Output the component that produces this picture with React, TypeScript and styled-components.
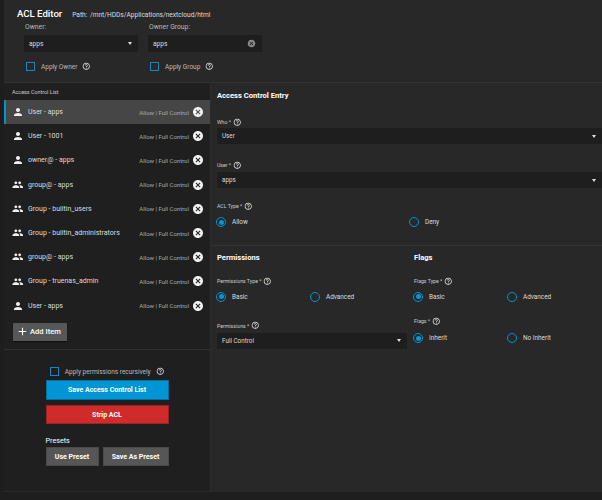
import React from "react";
import styled, { createGlobalStyle } from "styled-components";
import { MdPerson, MdPeople, MdCancel, MdHelpOutline, MdAdd } from "react-icons/md";

const BLUE = "#0095d5";

const GlobalStyle = createGlobalStyle`
  html, body { margin: 0; padding: 0; background: #1e1e1e; }
  body { font-family: Roboto, "Noto Sans", "Liberation Sans", sans-serif; color: #ddd; }
  * { box-sizing: border-box; }
`;

const Page = styled.div`
  width: 602px;
  height: 500px;
  overflow: hidden;
  background: #1e1e1e;
  padding-left: 4px;
`;

/* ---------- header ---------- */
const Header = styled.header`
  height: 83px;
  background: #282828;
  border-bottom: 1px solid #323232;
  padding: 8px 0 0 13px;
`;
const TitleRow = styled.div`
  display: flex;
  align-items: baseline;
  gap: 10px;
  height: 12px;
`;
const Title = styled.h1`
  margin: 0;
  font-size: 9.6px;
  font-weight: 500;
  line-height: 12px;
  color: #fff;
`;
const PathText = styled.span`
  font-size: 6.6px;
  color: #ddd;
  word-spacing: 1px;
`;
const FieldsGrid = styled.div`
  display: grid;
  grid-template-columns: 114px 114px;
  column-gap: 10px;
  padding-left: 7px;
  margin-top: 3px;
`;
const Field = styled.div`
  display: flex;
  flex-direction: column;
`;
const FieldLabel = styled.label`
  font-size: 6.8px;
  line-height: 9px;
  color: #bbb;
  padding-left: 1px;
`;
const InputBox = styled.div`
  margin-top: 3px;
  height: 17px;
  background: #1e1e1e;
  display: flex;
  align-items: center;
  justify-content: space-between;
  padding: 0 6px 0 5px;
  font-size: 6.6px;
  color: #ddd;
`;
const Caret = styled.span`
  width: 0;
  height: 0;
  border-left: 2.5px solid transparent;
  border-right: 2.5px solid transparent;
  border-top: 3px solid #e0e0e0;
`;
const CheckRow = styled.div<{ $mt?: number; $center?: boolean }>`
  display: flex;
  align-items: center;
  justify-content: ${(p) => (p.$center ? "center" : "flex-start")};
  gap: 6px;
  margin-top: ${(p) => p.$mt ?? 0}px;
  padding-left: ${(p) => (p.$center ? 0 : 2)}px;
  height: 9px;
  font-size: 6.5px;
  color: #bbb;
`;
const CheckBox = styled.span`
  width: 9px;
  height: 9px;
  border: 1.5px solid #1f82bb;
  flex-shrink: 0;
`;
const Help = styled(MdHelpOutline)`
  width: 8.5px;
  height: 8.5px;
  color: #e8e8e8;
  flex-shrink: 0;
  margin-left: -1px;
`;

/* ---------- main ---------- */
const Main = styled.div`
  display: flex;
  height: 409px;
`;
const LeftPanel = styled.aside`
  width: 206px;
  flex-shrink: 0;
  background: #1f1f1f;
  border-bottom: 1px solid #2a2a2a;
  display: flex;
  flex-direction: column;
`;
const ListSection = styled.div`
  height: 267px;
  flex-shrink: 0;
  border-bottom: 1px solid #303030;
`;
const ListHeader = styled.div`
  height: 17px;
  display: flex;
  align-items: center;
  padding-left: 8px;
  font-size: 5.4px;
  color: #ccc;
`;
const Row = styled.div<{ $selected?: boolean }>`
  height: 24.2px;
  display: flex;
  align-items: center;
  gap: 4px;
  padding: 0 6px 0 8px;
  background: ${(p) => (p.$selected ? "#464646" : "transparent")};
  box-shadow: ${(p) => (p.$selected ? `inset 2px 0 0 ${BLUE}` : "none")};
`;
const RowIcon = styled.span`
  width: 12px;
  height: 12px;
  display: flex;
  align-items: center;
  justify-content: center;
  color: #f0f0f0;
`;
const RowName = styled.span`
  flex: 1;
  font-size: 7px;
  color: #ddd;
`;
const RowMeta = styled.span`
  font-size: 6px;
  color: #aaa;
  margin-right: -1px;
`;
const CloseIcon = styled(MdCancel)`
  width: 12px;
  height: 12px;
  color: #f2f2f2;
`;
const AddButton = styled.button`
  margin: 5px 0 0 9px;
  height: 18px;
  width: 54px;
  border: none;
  background: #575757;
  box-shadow: 0 1px 1px rgba(0, 0, 0, 0.5);
  color: #fff;
  font-family: inherit;
  font-size: 7.6px;
  font-weight: 500;
  display: flex;
  align-items: center;
  gap: 1px;
  padding: 0 0 0 3px;
`;

const BottomSection = styled.div`
  display: flex;
  flex-direction: column;
  align-items: center;
  padding-top: 17px;
`;
const ActionsColumn = styled.div`
  width: 123px;
  display: flex;
  flex-direction: column;
`;
const ActionButton = styled.button<{ $tone: "blue" | "red" | "gray"; $mt?: number }>`
  margin-top: ${(p) => p.$mt ?? 0}px;
  height: ${(p) => (p.$tone === "blue" ? 20 : 19)}px;
  border: 1px solid
    ${(p) => (p.$tone === "blue" ? "#0b6d9b" : p.$tone === "red" ? "#9d2222" : "#4a4a4a")};
  background: ${(p) => (p.$tone === "blue" ? BLUE : p.$tone === "red" ? "#d02b2b" : "#565656")};
  color: #fff;
  font-family: inherit;
  font-size: 7px;
  font-weight: 700;
  padding: 0;
`;
const PresetsLabel = styled.div`
  margin-top: 12px;
  font-size: 7.2px;
  line-height: 9px;
  color: #fff;
`;
const PresetRow = styled.div`
  margin-top: 2px;
  display: grid;
  grid-template-columns: 53px 1fr;
  gap: 4px;
`;

/* ---------- right panel ---------- */
const RightPanel = styled.section`
  flex: 1;
  background: #282828;
  border-left: 1px solid #2c2c2c;
  display: flex;
  flex-direction: column;
`;
const EntrySection = styled.div`
  padding: 8px 0 18px 6px;
  border-bottom: 1px solid #343434;
`;
const SectionHeading = styled.h2`
  margin: 0;
  font-size: 7.6px;
  font-weight: 700;
  line-height: 10px;
  color: #fff;
`;
const FormLabel = styled.div<{ $mt: number }>`
  margin-top: ${(p) => p.$mt}px;
  height: 8px;
  display: flex;
  align-items: center;
  gap: 3px;
  font-size: 5.2px;
  color: #ccc;
`;
const SelectBox = styled.div<{ $mt: number; $h?: number }>`
  margin-top: ${(p) => p.$mt}px;
  height: ${(p) => p.$h ?? 16}px;
  background: #1e1e1e;
  display: flex;
  align-items: center;
  justify-content: space-between;
  padding: 0 6px 0 5px;
  font-size: 6.3px;
  color: #ddd;
`;
const RadioGrid = styled.div<{ $cols: string; $mt: number }>`
  margin-top: ${(p) => p.$mt}px;
  margin-left: -1px;
  display: grid;
  grid-template-columns: ${(p) => p.$cols};
  height: 10px;
`;
const RadioOption = styled.div`
  display: flex;
  align-items: center;
  gap: 6px;
  font-size: 6.4px;
  color: #ddd;
`;
const RadioCircle = styled.span<{ $on?: boolean }>`
  width: 10px;
  height: 10px;
  border-radius: 50%;
  border: 1.5px solid ${BLUE};
  display: flex;
  align-items: center;
  justify-content: center;
  flex-shrink: 0;
  &::after {
    content: "";
    width: 5px;
    height: 5px;
    border-radius: 50%;
    background: ${(p) => (p.$on ? BLUE : "transparent")};
  }
`;
const PermGrid = styled.div`
  padding: 7px 0 0 6px;
  display: grid;
  grid-template-columns: 190px 1fr;
  column-gap: 7px;
`;
const Column = styled.div`
  display: flex;
  flex-direction: column;
`;

type Entry = { kind: "user" | "group"; name: string };
const entries: Entry[] = [
  { kind: "user", name: "User - apps" },
  { kind: "user", name: "User - 1001" },
  { kind: "user", name: "owner@ - apps" },
  { kind: "group", name: "group@ - apps" },
  { kind: "group", name: "Group - builtin_users" },
  { kind: "group", name: "Group - builtin_administrators" },
  { kind: "group", name: "group@ - apps" },
  { kind: "group", name: "Group - truenas_admin" },
  { kind: "user", name: "User - apps" },
];

const Radio = ({ label, on }: { label: string; on?: boolean }) => (
  <RadioOption>
    <RadioCircle $on={on} />
    <span>{label}</span>
  </RadioOption>
);

export default function App() {
  return (
    <Page>
      <GlobalStyle />
      <Header>
        <TitleRow>
          <Title>ACL Editor</Title>
          <PathText>Path: /mnt/HDDs/Applications/nextcloud/html</PathText>
        </TitleRow>
        <FieldsGrid>
          <Field>
            <FieldLabel>Owner:</FieldLabel>
            <InputBox>
              <span>apps</span>
              <Caret />
            </InputBox>
            <CheckRow $mt={10}>
              <CheckBox />
              <span>Apply Owner</span>
              <Help />
            </CheckRow>
          </Field>
          <Field>
            <FieldLabel>Owner Group:</FieldLabel>
            <InputBox>
              <span>apps</span>
              <MdCancel size={9} color="#8a8a8a" />
            </InputBox>
            <CheckRow $mt={10}>
              <CheckBox />
              <span>Apply Group</span>
              <Help />
            </CheckRow>
          </Field>
        </FieldsGrid>
      </Header>

      <Main>
        <LeftPanel>
          <ListSection>
            <ListHeader>Access Control List</ListHeader>
            {entries.map((e, i) => (
              <Row key={i} $selected={i === 0}>
                <RowIcon>
                  {e.kind === "user" ? <MdPerson size={12} /> : <MdPeople size={11.5} />}
                </RowIcon>
                <RowName>{e.name}</RowName>
                <RowMeta>Allow | Full Control</RowMeta>
                <CloseIcon />
              </Row>
            ))}
            <AddButton>
              <MdAdd size={13} />
              <span>Add Item</span>
            </AddButton>
          </ListSection>
          <BottomSection>
            <ActionsColumn>
              <CheckRow $center>
                <CheckBox />
                <span>Apply permissions recursively</span>
                <Help />
              </CheckRow>
              <ActionButton $tone="blue" $mt={4}>Save Access Control List</ActionButton>
              <ActionButton $tone="red" $mt={5}>Strip ACL</ActionButton>
              <PresetsLabel>Presets</PresetsLabel>
              <PresetRow>
                <ActionButton $tone="gray">Use Preset</ActionButton>
                <ActionButton $tone="gray">Save As Preset</ActionButton>
              </PresetRow>
            </ActionsColumn>
          </BottomSection>
        </LeftPanel>

        <RightPanel>
          <EntrySection>
            <SectionHeading>Access Control Entry</SectionHeading>
            <FormLabel $mt={17}>
              <span>Who *</span>
              <Help />
            </FormLabel>
            <SelectBox $mt={2}>
              <span>User</span>
              <Caret />
            </SelectBox>
            <FormLabel $mt={17}>
              <span>User *</span>
              <Help />
            </FormLabel>
            <SelectBox $mt={3}>
              <span>apps</span>
              <Caret />
            </SelectBox>
            <FormLabel $mt={14}>
              <span>ACL Type *</span>
              <Help />
            </FormLabel>
            <RadioGrid $cols="193px 1fr" $mt={7}>
              <Radio label="Allow" on />
              <Radio label="Deny" />
            </RadioGrid>
          </EntrySection>

          <PermGrid>
            <Column>
              <SectionHeading>Permissions</SectionHeading>
              <FormLabel $mt={14}>
                <span>Permissions Type *</span>
                <Help />
              </FormLabel>
              <RadioGrid $cols="94px 1fr" $mt={6.5}>
                <Radio label="Basic" on />
                <Radio label="Advanced" />
              </RadioGrid>
              <FormLabel $mt={20}>
                <span>Permissions *</span>
                <Help />
              </FormLabel>
              <SelectBox $mt={3} $h={16}>
                <span>Full Control</span>
                <Caret />
              </SelectBox>
            </Column>
            <Column>
              <SectionHeading>Flags</SectionHeading>
              <FormLabel $mt={14}>
                <span>Flags Type *</span>
                <Help />
              </FormLabel>
              <RadioGrid $cols="94px 1fr" $mt={6.5}>
                <Radio label="Basic" on />
                <Radio label="Advanced" />
              </RadioGrid>
              <FormLabel $mt={15.5}>
                <span>Flags *</span>
                <Help />
              </FormLabel>
              <RadioGrid $cols="94px 1fr" $mt={8}>
                <Radio label="Inherit" on />
                <Radio label="No Inherit" />
              </RadioGrid>
            </Column>
          </PermGrid>
        </RightPanel>
      </Main>
    </Page>
  );
}
